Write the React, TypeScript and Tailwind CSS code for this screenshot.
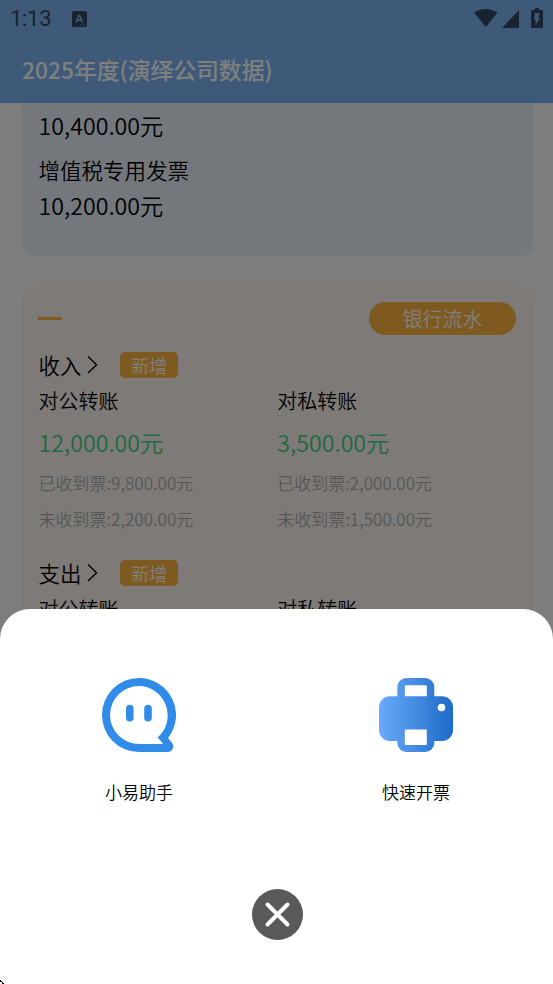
import { useState } from "react";

type Transfer = {
  label: string;
  amount: string;
  received: string;
  missing: string;
};

const INCOME: Transfer[] = [
  { label: "对公转账", amount: "12,000.00元", received: "9,800.00元", missing: "2,200.00元" },
  { label: "对私转账", amount: "3,500.00元", received: "2,000.00元", missing: "1,500.00元" },
];

function StatusBar() {
  return (
    <div className="flex h-[38px] items-center px-[10px] text-[#33475f]">
      <span className="w-[41px] font-[Roboto] text-[22px] font-normal leading-[38px] tracking-[-0.3px]">
        1:13
      </span>
      <svg className="ml-[21px]" width="15" height="16" viewBox="0 0 15 16">
        <rect width="15" height="16" rx="1.5" fill="currentColor" />
        <path d="M4 11.5 7 4.5h.6l3 7M5.2 9.3h4.2" fill="none" stroke="#7cb5f1" strokeWidth="1.5" />
        <path d="M8 14h1M10 14h1M12 14h1" stroke="#7cb5f1" strokeWidth="1" />
      </svg>
      <div className="ml-auto flex items-center pb-[2px]">
        <svg width="24" height="20" viewBox="0 0 24 20" fill="currentColor">
          <path d="M0 4.5C7-.2 16.5-.2 23.5 4.5L11.8 19z" />
        </svg>
        <svg className="ml-[4px]" width="18" height="20" viewBox="0 0 18 20" fill="currentColor">
          <path d="M0 20 17 2V20z" />
        </svg>
        <svg className="ml-[11px]" width="12" height="20" viewBox="0 0 12 20">
          <path
            d="M4 0h4v2h2.5A1.5 1.5 0 0 1 12 3.5v15A1.5 1.5 0 0 1 10.5 20h-9A1.5 1.5 0 0 1 0 18.5v-15A1.5 1.5 0 0 1 1.5 2H4z"
            fill="currentColor"
          />
          <path d="M4 5h4.5L7 9.5h2L4.5 17.5V11.5H3z" fill="#7cb5f1" />
        </svg>
      </div>
    </div>
  );
}

function SectionTitle({ children }: { children: string }) {
  return (
    <div className="flex h-[26px] items-center">
      <span className="text-[21.4px] leading-[26px]">{children}</span>
      <svg className="ml-[6px]" width="11" height="18" viewBox="0 0 11 18">
        <path d="M1 .5 9.5 8.7 1 16.9" fill="none" stroke="#000" strokeWidth="1.4" />
      </svg>
      <button
        type="button"
        className="ml-[22px] h-[26px] w-[58px] rounded-[5px] bg-[#fcb442] text-[18px] leading-[26px] text-white"
      >
        新增
      </button>
    </div>
  );
}

function ChatIcon() {
  return (
    <svg width="74" height="74" viewBox="0 0 74 74" fill="#318ce9">
      <path
        fillRule="evenodd"
        d="M37 0A37 37 0 0 1 66 60L69.7 64.5C73 68.5 70.5 74 66 74H37A37 37 0 0 1 37 0ZM37 8A29 29 0 0 0 37 66H61.3L55.7 59.5 58.5 56.5A29.3 29.3 0 0 0 37 8Z"
      />
      <rect x="24" y="26.7" width="7.6" height="16.8" rx="3.8" />
      <rect x="42.2" y="26.7" width="7.6" height="16.8" rx="3.8" />
    </svg>
  );
}

function PrinterIcon() {
  return (
    <svg width="74" height="74" viewBox="0 0 74 74">
      <defs>
        <linearGradient id="printer" x1="0" y1="0" x2="74" y2="0" gradientUnits="userSpaceOnUse">
          <stop offset="0" stopColor="#6aabf9" />
          <stop offset="1" stopColor="#1d6ac8" />
        </linearGradient>
      </defs>
      <g fill="url(#printer)">
        <rect y="18.3" width="74" height="44.7" rx="11" />
        <rect x="18.3" width="37" height="74" rx="9" />
      </g>
      <g fill="#fff">
        <rect x="25.8" y="7.3" width="22" height="11" rx="1" />
        <rect x="25.8" y="51.5" width="22" height="15.5" rx="1" />
        <circle cx="62.5" cy="29.5" r="3.8" />
      </g>
    </svg>
  );
}

function ActionSheet({ onClose }: { onClose: () => void }) {
  return (
    <div className="absolute inset-0 flex flex-col justify-end bg-black/50">
      <div className="flex h-[375px] flex-col items-center rounded-t-[30px] bg-white pt-[69px]">
        <div className="grid w-full grid-cols-[278px_276px]">
          <button type="button" className="flex flex-col items-center">
            <ChatIcon />
            <span className="mt-[27px] text-[17px] leading-[26px]">小易助手</span>
          </button>
          <button type="button" className="flex flex-col items-center">
            <PrinterIcon />
            <span className="mt-[27px] text-[17px] leading-[26px]">快速开票</span>
          </button>
        </div>
        <button type="button" aria-label="关闭" className="ml-[2px] mt-[84px]" onClick={onClose}>
          <svg width="51" height="51" viewBox="0 0 51 51">
            <circle cx="25.5" cy="25.5" r="25.5" fill="#595959" />
            <path
              d="M15.5 15.5 35.5 35.5M35.5 15.5 15.5 35.5"
              stroke="#fff"
              strokeWidth="4"
              strokeLinecap="round"
            />
          </svg>
        </button>
      </div>
      <svg className="absolute bottom-0 left-0" width="4" height="4" viewBox="0 0 4 4">
        <path d="M0 0h1v1h1v1h-2zM2 2h1v1h1v1h-2z" fill="#000" />
      </svg>
    </div>
  );
}

export default function App() {
  const [sheetOpen, setSheetOpen] = useState(true);

  return (
    <div className="relative h-[984px] w-full overflow-hidden bg-[#fdfdfd] font-['Noto_Sans_CJK_SC',sans-serif] font-[350] text-black">
      <header className="h-[103px] bg-[#7cb5f1]">
        <StatusBar />
        <h1 className="pl-[22px] pt-[15px] text-[22.8px] font-medium leading-[34px] text-white">
          2025年度(演绎公司数据)
        </h1>
      </header>

      <main className="flex flex-col gap-[30px] pl-[22px] pr-[20px]">
        <section className="h-[153px] rounded-b-[13px] bg-[#e9f1fb] pl-[16.5px] pt-[5px] shadow-[0_0_24px_rgba(0,0,0,0.03)]">
          <p className="text-[23.2px] leading-[34px]">10,400.00元</p>
          <p className="mt-[11px] text-[21.5px] leading-[34px]">增值税专用发票</p>
          <p className="mt-[1px] text-[23.2px] leading-[34px]">10,200.00元</p>
        </section>

        <section className="h-[420px] rounded-[13px] bg-[#fdf4ee] pl-[16.5px] pr-[17px] pt-[16px] shadow-[0_0_24px_rgba(0,0,0,0.03)]">
          <div className="-ml-[0.5px] flex h-[33px] items-center">
            <span className="h-[3px] w-[24px] bg-[#fcb442]" />
            <span className="h-px flex-1 bg-white" />
            <span className="h-[33px] w-[147px] rounded-full bg-[#fcb442] text-center text-[20px] leading-[33px] text-white">
              银行流水
            </span>
          </div>

          <div className="mt-[17px]">
            <SectionTitle>收入</SectionTitle>
            <div className="mt-[8px] grid grid-cols-2">
              {INCOME.map((t) => (
                <div key={t.label}>
                  <p className="text-[20px] leading-[30px]">{t.label}</p>
                  <p className="mt-[9px] text-[23.2px] leading-[34px] text-[#3cd683]">{t.amount}</p>
                  <p className="mt-[11px] text-[17px] leading-[26px] text-[#b0afae]">已收到票:{t.received}</p>
                  <p className="mt-[10px] text-[17px] leading-[26px] text-[#b0afae]">未收到票:{t.missing}</p>
                </div>
              ))}
            </div>
          </div>

          <div className="mt-[28px]">
            <SectionTitle>支出</SectionTitle>
            <div className="mt-[8px] grid grid-cols-2 text-[20px] leading-[30px]">
              <p>对公转账</p>
              <p>对私转账</p>
            </div>
          </div>
        </section>
      </main>

      {sheetOpen && <ActionSheet onClose={() => setSheetOpen(false)} />}
    </div>
  );
}
